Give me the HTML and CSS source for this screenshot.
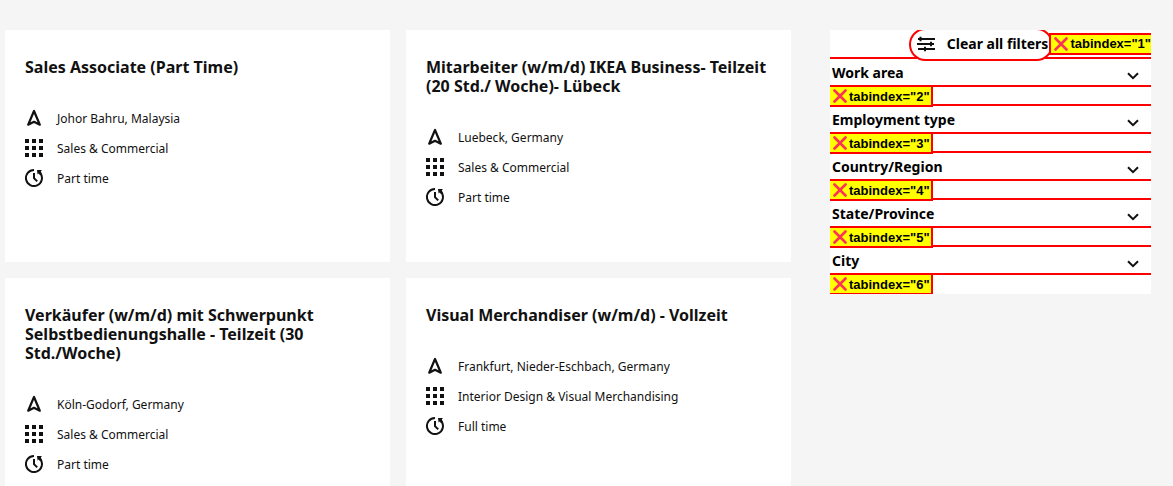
FILE: index.html
```html
<!DOCTYPE html>
<html lang="en">
<head>
<meta charset="utf-8">
<meta name="viewport" content="width=device-width, initial-scale=1">
<title>Job search</title>
<link rel="stylesheet" href="styles.css">
</head>
<body>
<svg class="sprite" aria-hidden="true">
  <symbol id="place" viewBox="0 0 18 18"><path d="M9 2 3.200 15.700 9 12.800l5.800 2.900z" fill="none" stroke="currentColor" stroke-width="2.200" stroke-linejoin="round"/></symbol>
  <symbol id="grid" viewBox="0 0 18 18"><path d="M0 0h4v4H0zM7 0h4v4H7zM14 0h4v4h-4zM0 7h4v4H0zM7 7h4v4H7zM14 7h4v4h-4zM0 14h4v4H0zM7 14h4v4H7zM14 14h4v4h-4z" fill="currentColor"/></symbol>
  <symbol id="clock" viewBox="0 0 18 18"><path d="M9 1a8 8 0 1 0 6.500 3.400" fill="none" stroke="currentColor" stroke-width="2"/><path d="M9 4v5.200l3.200 3.200" fill="none" stroke="currentColor" stroke-width="2"/><path d="M12 1h5l-1.200 1.200L17 5.500l-2 .5-1.500-1.500L12.600 5.500z" fill="currentColor"/></symbol>
  <symbol id="cross" viewBox="0 0 14 14"><path d="M1.500 1.500l11 11M12.500 1.500l-11 11" fill="none" stroke="#fb3158" stroke-width="2.600" stroke-linecap="round"/></symbol>
  <symbol id="chevron" viewBox="0 0 12 8"><path d="M1 1.200l5 5 5-5" fill="none" stroke="currentColor" stroke-width="2"/></symbol>
  <symbol id="sliders" viewBox="0 0 18 16"><path d="M1 3h17M0 8h17M1 13h17" fill="none" stroke="currentColor" stroke-width="2"/><path d="M3.500 0.800v4.400M14 5.800v4.400M8 10.800v4.400" fill="none" stroke="currentColor" stroke-width="2"/></symbol>
</svg>
<div class="page">
  <main class="jobs">
    <article class="job">
      <h2 class="job-title">Sales Associate (Part Time)</h2>
      <ul class="facts">
        <li class="fact"><svg class="fact-icon"><use href="#place"/></svg>Johor Bahru, Malaysia</li>
        <li class="fact"><svg class="fact-icon"><use href="#grid"/></svg>Sales &amp; Commercial</li>
        <li class="fact"><svg class="fact-icon"><use href="#clock"/></svg>Part time</li>
      </ul>
    </article>
    <article class="job">
      <h2 class="job-title">Mitarbeiter (w/m/d) IKEA Business- Teilzeit (20 Std./ Woche)- Lübeck</h2>
      <ul class="facts">
        <li class="fact"><svg class="fact-icon"><use href="#place"/></svg>Luebeck, Germany</li>
        <li class="fact"><svg class="fact-icon"><use href="#grid"/></svg>Sales &amp; Commercial</li>
        <li class="fact"><svg class="fact-icon"><use href="#clock"/></svg>Part time</li>
      </ul>
    </article>
    <article class="job">
      <h2 class="job-title">Verkäufer (w/m/d) mit Schwerpunkt Selbstbedienungshalle - Teilzeit (30 Std./Woche)</h2>
      <ul class="facts">
        <li class="fact"><svg class="fact-icon"><use href="#place"/></svg>Köln-Godorf, Germany</li>
        <li class="fact"><svg class="fact-icon"><use href="#grid"/></svg>Sales &amp; Commercial</li>
        <li class="fact"><svg class="fact-icon"><use href="#clock"/></svg>Part time</li>
      </ul>
    </article>
    <article class="job">
      <h2 class="job-title">Visual Merchandiser (w/m/d) - Vollzeit</h2>
      <ul class="facts">
        <li class="fact"><svg class="fact-icon"><use href="#place"/></svg>Frankfurt, Nieder-Eschbach, Germany</li>
        <li class="fact"><svg class="fact-icon"><use href="#grid"/></svg>Interior Design &amp; Visual Merchandising</li>
        <li class="fact"><svg class="fact-icon"><use href="#clock"/></svg>Full time</li>
      </ul>
    </article>
  </main>
  <aside class="filters">
    <div class="toolbar">
      <button class="clear" type="button"><svg class="clear-icon"><use href="#sliders"/></svg>Clear all filters</button>
      <span class="tag"><svg class="tag-icon"><use href="#cross"/></svg>tabindex="1"</span>
    </div>
    <section class="filter">
      <button class="filter-head" type="button">Work area<svg class="chevron"><use href="#chevron"/></svg></button>
      <div class="filter-note"><span class="tag"><svg class="tag-icon"><use href="#cross"/></svg>tabindex="2"</span></div>
    </section>
    <section class="filter">
      <button class="filter-head" type="button">Employment type<svg class="chevron"><use href="#chevron"/></svg></button>
      <div class="filter-note"><span class="tag"><svg class="tag-icon"><use href="#cross"/></svg>tabindex="3"</span></div>
    </section>
    <section class="filter">
      <button class="filter-head" type="button">Country/Region<svg class="chevron"><use href="#chevron"/></svg></button>
      <div class="filter-note"><span class="tag"><svg class="tag-icon"><use href="#cross"/></svg>tabindex="4"</span></div>
    </section>
    <section class="filter">
      <button class="filter-head" type="button">State/Province<svg class="chevron"><use href="#chevron"/></svg></button>
      <div class="filter-note"><span class="tag"><svg class="tag-icon"><use href="#cross"/></svg>tabindex="5"</span></div>
    </section>
    <section class="filter">
      <button class="filter-head" type="button">City<svg class="chevron"><use href="#chevron"/></svg></button>
      <div class="filter-note"><span class="tag"><svg class="tag-icon"><use href="#cross"/></svg>tabindex="6"</span></div>
    </section>
  </aside>
</div>
</body>
</html>
```
FILE: styles.css
```css
* {
  box-sizing: border-box;
}

body {
  margin: 0;
  background: #f5f5f5;
  color: #111;
  font-family: "Noto Sans", sans-serif;
}

.sprite {
  display: none;
}

.page {
  display: grid;
  grid-template-columns: minmax(0, 786fr) minmax(0, 321fr);
  column-gap: 39px;
  align-items: start;
  padding: 30px 22px 0 5px;
}

.jobs {
  display: grid;
  grid-template-columns: repeat(2, minmax(0, 1fr));
  gap: 16px;
}

.job {
  min-height: 232px;
  padding: 28px 20px;
  background: #fff;
}

.job-title {
  margin: 0 0 26px;
  font-size: 16px;
  line-height: 19px;
  font-weight: 700;
}

.facts {
  margin: 0;
  padding: 0;
  list-style: none;
}

.fact {
  display: flex;
  align-items: center;
  gap: 14px;
  height: 30px;
  font-size: 12px;
}

.fact-icon {
  flex: none;
  width: 18px;
  height: 18px;
}

.filters {
  overflow: hidden;
  background: #fff;
  color: #000;
}

.toolbar {
  display: flex;
  align-items: center;
  justify-content: flex-end;
  height: 29px;
  border-bottom: 2px solid #f00;
}

.clear {
  display: flex;
  flex: none;
  align-items: center;
  align-self: flex-start;
  gap: 12px;
  height: 33px;
  margin: -2px -4px 0 0;
  padding: 0 3px 2px 6px;
  border: 2px solid #f00;
  border-radius: 17px;
  background: #fff;
  color: #000;
  font: 700 14px "Noto Sans", sans-serif;
  white-space: nowrap;
}

.clear-icon {
  width: 18px;
  height: 16px;
  color: #111;
}

.tag {
  display: flex;
  position: relative;
  flex: none;
  align-items: center;
  gap: 2px;
  height: 22px;
  padding: 0 1px 0 3px;
  border: 2px solid #f00;
  background: #ff0;
  color: #000;
  font: 700 13px "Liberation Sans", Arial, sans-serif;
  white-space: nowrap;
}

.toolbar .tag {
  margin-right: -3px;
}

.tag-icon {
  width: 14px;
  height: 14px;
}

.filter-head {
  display: flex;
  align-items: center;
  justify-content: space-between;
  width: 100%;
  height: 26px;
  padding: 0 12px 0 2px;
  border: 0;
  background: #fff;
  color: #000;
  font: 700 14px "Noto Sans", sans-serif;
}

.chevron {
  width: 12px;
  height: 8px;
  margin-top: 8px;
  color: #111;
}

.filter-note {
  display: flex;
  align-items: flex-start;
  height: 21px;
  border: solid #f00;
  border-width: 2px 0;
}

.filter-note .tag {
  margin: -2px 0 0 -2px;
}

.filter:last-child .filter-note {
  border-bottom: 0;
}
```
